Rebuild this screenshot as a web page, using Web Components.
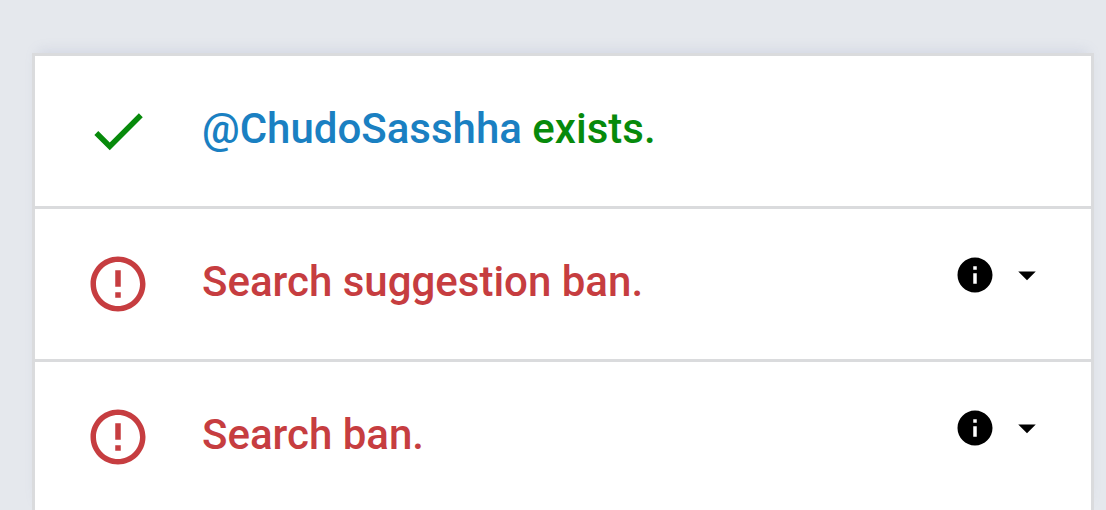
<!DOCTYPE html>
<html lang="en">
<head>
<meta charset="utf-8">
<meta name="viewport" content="width=device-width, initial-scale=1">
<title>Shadowban Test</title>
<style>
    body {
        margin: 0;
        overflow: hidden;
        background: #e5e8ed;
        font-family: Roboto, sans-serif;
    }
</style>
</head>
<body>
<result-card>
    <result-row status="ok"><a href="#ChudoSasshha">@ChudoSasshha</a> exists.</result-row>
    <result-row status="ban" expandable>Search suggestion ban.</result-row>
    <result-row status="ban" expandable>Search ban.</result-row>
</result-card>

<script>
class ResultCard extends HTMLElement {
    constructor() {
        super();
        this.attachShadow({ mode: 'open' });
    }

    connectedCallback() {
        this.shadowRoot.innerHTML = `
            <style>
                :host {
                    display: flex;
                    flex-direction: column;
                    gap: 3px;
                    margin: 53px 12px 0 32px;
                    border: 3px solid #dadbdd;
                    background: #dadbdd;
                    box-shadow: 0 -8px 12px -6px rgba(120, 135, 180, 0.18);
                }
            </style>
            <slot></slot>
        `;
    }
}

class StatusIcon extends HTMLElement {
    constructor() {
        super();
        this.attachShadow({ mode: 'open' });

        this.PATHS = {
            ok: 'M9 16.17 4.83 12l-1.42 1.41L9 19 21 7l-1.41-1.41z',
            ban: 'M11 15h2v2h-2zm0-8h2v6h-2zm.99-5C6.47 2 2 6.48 2 12s4.47 10 9.99 10C17.52 22 22 17.52 22 12S17.52 2 11.99 2M12 20c-4.42 0-8-3.58-8-8s3.58-8 8-8 8 3.58 8 8-3.58 8-8 8'
        };
    }

    connectedCallback() {
        this.shadowRoot.innerHTML = `
            <style>
                :host {
                    display: block;
                    width: 66px;
                    height: 66px;
                }
                svg {
                    display: block;
                    width: 100%;
                    height: 100%;
                    fill: currentColor;
                }
            </style>
            <svg viewBox="0 0 24 24" aria-hidden="true">
                <path d="${this.PATHS[this.getAttribute('name')]}"/>
            </svg>
        `;
    }
}

class ResultRow extends HTMLElement {
    constructor() {
        super();
        this.attachShadow({ mode: 'open' });
    }

    connectedCallback() {
        const status = this.getAttribute('status');
        this.shadowRoot.innerHTML = `
            <style>
                :host {
                    display: flex;
                    align-items: center;
                    min-height: 150px;
                    box-sizing: border-box;
                    padding: 0 43px 0 50px;
                    background: #fff;
                    color: #c63d40;
                }
                :host([status="ok"]) {
                    color: #078a0b;
                }
                status-icon {
                    flex: none;
                    margin-right: 51px;
                }
                .text {
                    flex: 1;
                    padding-bottom: 4px;
                    font-size: 42px;
                    font-weight: 500;
                    line-height: 60px;
                }
                ::slotted(a) {
                    color: #1a80c2;
                    text-decoration: none;
                }
                button {
                    display: flex;
                    gap: 10px;
                    flex: none;
                    margin-bottom: 18px;
                    padding: 0;
                    border: 0;
                    background: none;
                    color: #000;
                    cursor: pointer;
                }
                button svg {
                    width: 42px;
                    height: 42px;
                    fill: currentColor;
                }
            </style>
            <status-icon name="${status}"></status-icon>
            <div class="text"><slot></slot></div>
            ${this.hasAttribute('expandable') ? this.renderToggle() : ''}
        `;

        const toggle = this.shadowRoot.querySelector('button');
        if (toggle) {
            toggle.addEventListener('click', () => {
                const open = toggle.getAttribute('aria-expanded') === 'true';
                toggle.setAttribute('aria-expanded', String(!open));
            });
        }
    }

    renderToggle() {
        return `
            <button type="button" aria-label="More info" aria-expanded="false">
                <svg viewBox="0 0 24 24" aria-hidden="true">
                    <path d="M12 2C6.48 2 2 6.48 2 12s4.48 10 10 10 10-4.48 10-10S17.52 2 12 2m1 15h-2v-6h2zm0-8h-2V7h2z"/>
                </svg>
                <svg viewBox="0 0 24 24" aria-hidden="true">
                    <path d="m7 10 5 5 5-5z"/>
                </svg>
            </button>
        `;
    }
}

customElements.define('status-icon', StatusIcon);
customElements.define('result-row', ResultRow);
customElements.define('result-card', ResultCard);
</script>
</body>
</html>
